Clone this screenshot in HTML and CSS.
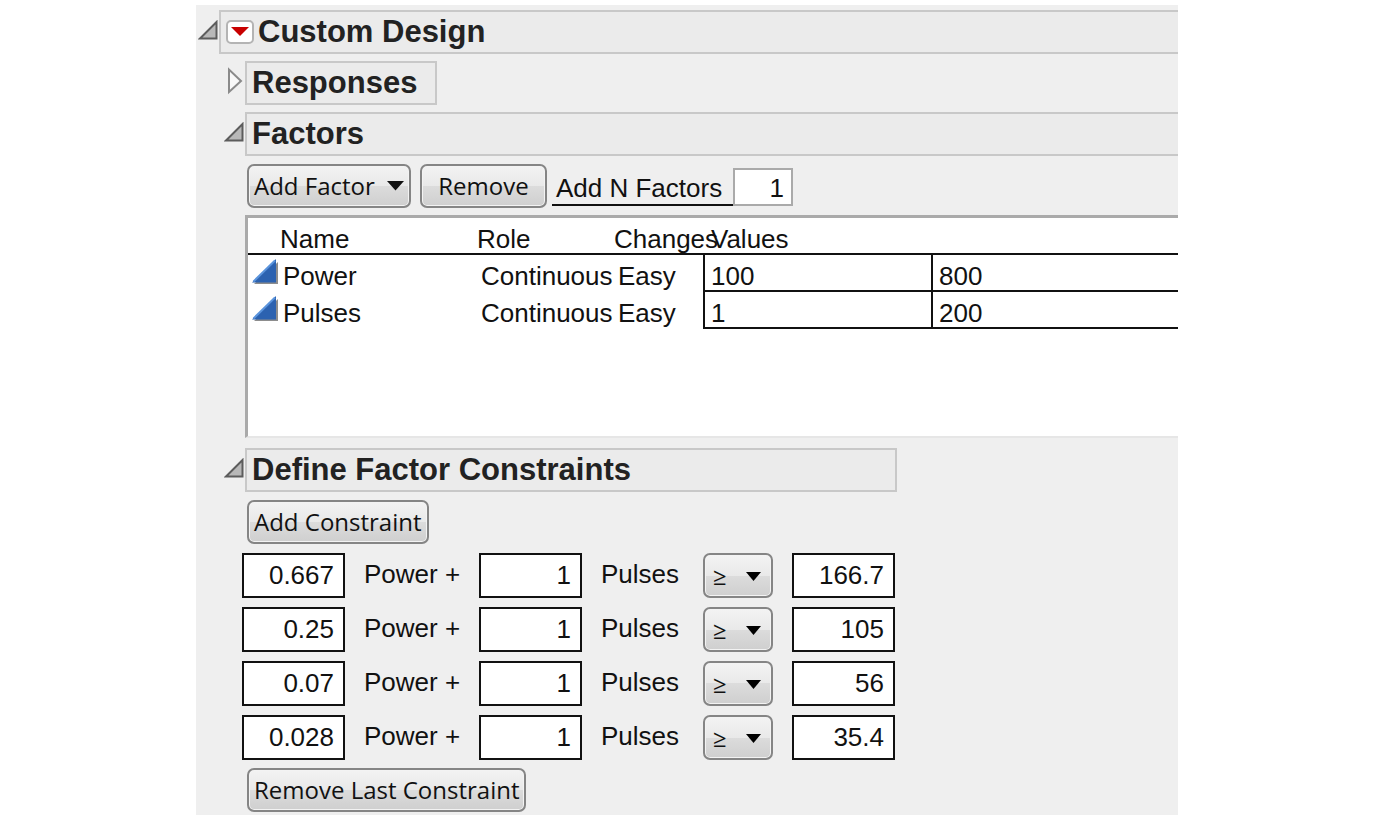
FILE: index.html
```html
<!DOCTYPE html>
<html lang="en">
<head>
  <meta charset="UTF-8">
  <title>Custom Design</title>
  <link rel="stylesheet" href="styles.css">
</head>
<body>
  <main class="panel">
    <div class="outline">
      <button class="toggle" aria-label="Collapse Custom Design">
        <svg width="20" height="20" viewBox="0 0 20 20"><path d="M2 18.500 18.500 2V18.500Z" fill="#b8b8b8" stroke="#5c5c5c" stroke-width="2"/></svg>
      </button>
      <div class="title title-open">
        <button class="menu" aria-label="Custom Design menu">
          <svg width="18" height="10" viewBox="0 0 18 10"><path d="M0 0H18L9 9Z" fill="#c80000"/></svg>
        </button>
        <h1>Custom Design</h1>
      </div>
    </div>

    <div class="content">
      <section class="outline">
        <button class="toggle" aria-label="Expand Responses">
          <svg width="20" height="28" viewBox="0 0 20 28"><path d="M5 2.500V25L17 14Z" fill="#f8f8f8" stroke="#8a8a8a" stroke-width="2"/></svg>
        </button>
        <div class="title title-small"><h2>Responses</h2></div>
      </section>

      <section>
        <div class="outline">
          <button class="toggle" aria-label="Collapse Factors">
            <svg width="20" height="20" viewBox="0 0 20 20"><path d="M2 18.500 18.500 2V18.500Z" fill="#b8b8b8" stroke="#5c5c5c" stroke-width="2"/></svg>
          </button>
          <div class="title title-open"><h2>Factors</h2></div>
        </div>
        <div class="toolbar">
          <button class="btn btn-factor">Add Factor
            <svg width="17" height="10" viewBox="0 0 17 10"><path d="M0 0H17L8.500 9.500Z" fill="#111"/></svg>
          </button>
          <button class="btn btn-remove">Remove</button>
          <div class="count">
            <label for="count">Add N Factors</label>
            <input type="text" id="count" value="1">
          </div>
        </div>
        <div class="factors">
          <table>
            <thead>
              <tr>
                <th class="col-name">Name</th>
                <th class="col-role">Role</th>
                <th class="col-changes">Changes</th>
                <th class="col-value">Values</th>
                <th></th>
              </tr>
            </thead>
            <tbody>
              <tr>
                <td class="name"><svg width="26" height="26" viewBox="0 0 26 26"><path d="M2 25H26V3Z" fill="#8d8d8d"/><path d="M0 23.500 24 0V23.500Z" fill="#2c62b0"/><path d="M1.500 22.500 23 1.500" stroke="#5b94dc" stroke-width="2"/></svg>Power</td>
                <td>Continuous</td>
                <td>Easy</td>
                <td class="value">100</td>
                <td class="value">800</td>
              </tr>
              <tr>
                <td class="name"><svg width="26" height="26" viewBox="0 0 26 26"><path d="M2 25H26V3Z" fill="#8d8d8d"/><path d="M0 23.500 24 0V23.500Z" fill="#2c62b0"/><path d="M1.500 22.500 23 1.500" stroke="#5b94dc" stroke-width="2"/></svg>Pulses</td>
                <td>Continuous</td>
                <td>Easy</td>
                <td class="value">1</td>
                <td class="value">200</td>
              </tr>
            </tbody>
          </table>
        </div>
      </section>

      <section>
        <div class="outline">
          <button class="toggle" aria-label="Collapse Define Factor Constraints">
            <svg width="20" height="20" viewBox="0 0 20 20"><path d="M2 18.500 18.500 2V18.500Z" fill="#b8b8b8" stroke="#5c5c5c" stroke-width="2"/></svg>
          </button>
          <div class="title title-medium"><h2>Define Factor Constraints</h2></div>
        </div>
        <div class="constraints">
          <button class="btn">Add Constraint</button>
          <div class="rows">
            <div class="constraint">
              <input type="text" id="power1" value="0.667">
              <label for="power1">Power +</label>
              <input type="text" id="pulses1" value="1">
              <label for="pulses1">Pulses</label>
              <div class="operator">
                <select aria-label="Operator"><option>≥</option><option>≤</option></select>
                <svg width="15" height="9" viewBox="0 0 15 9"><path d="M0 0H15L7.500 9Z"/></svg>
              </div>
              <input type="text" aria-label="Limit" value="166.7">
            </div>
            <div class="constraint">
              <input type="text" id="power2" value="0.25">
              <label for="power2">Power +</label>
              <input type="text" id="pulses2" value="1">
              <label for="pulses2">Pulses</label>
              <div class="operator">
                <select aria-label="Operator"><option>≥</option><option>≤</option></select>
                <svg width="15" height="9" viewBox="0 0 15 9"><path d="M0 0H15L7.500 9Z"/></svg>
              </div>
              <input type="text" aria-label="Limit" value="105">
            </div>
            <div class="constraint">
              <input type="text" id="power3" value="0.07">
              <label for="power3">Power +</label>
              <input type="text" id="pulses3" value="1">
              <label for="pulses3">Pulses</label>
              <div class="operator">
                <select aria-label="Operator"><option>≥</option><option>≤</option></select>
                <svg width="15" height="9" viewBox="0 0 15 9"><path d="M0 0H15L7.500 9Z"/></svg>
              </div>
              <input type="text" aria-label="Limit" value="56">
            </div>
            <div class="constraint">
              <input type="text" id="power4" value="0.028">
              <label for="power4">Power +</label>
              <input type="text" id="pulses4" value="1">
              <label for="pulses4">Pulses</label>
              <div class="operator">
                <select aria-label="Operator"><option>≥</option><option>≤</option></select>
                <svg width="15" height="9" viewBox="0 0 15 9"><path d="M0 0H15L7.500 9Z"/></svg>
              </div>
              <input type="text" aria-label="Limit" value="35.4">
            </div>
          </div>
          <button class="btn">Remove Last Constraint</button>
        </div>
      </section>
    </div>
  </main>
</body>
</html>
```

FILE: styles.css
```css
* {
  box-sizing: border-box;
}

body {
  margin: 0;
  background: #fff;
  color: #111;
  font-family: Arial, "Liberation Sans", sans-serif;
  font-size: 26px;
  line-height: 32px;
}

.panel {
  margin: 5px 210px 0 196px;
  padding: 5px 0 3px;
  background: #efefef;
  overflow: hidden;
}

.content {
  margin-left: 26px;
}

/* outline headings */
.outline {
  display: flex;
  margin-bottom: 7px;
}

.toggle {
  width: 23px;
  height: 40px;
  padding: 0;
  border: none;
  background: none;
  display: flex;
  align-items: center;
  justify-content: center;
}

.title {
  display: flex;
  align-items: center;
  height: 44px;
  padding-left: 5px;
  border: 2px solid #c8c8c8;
  background: #ebebeb;
}

.title-open {
  flex: 1;
  border-right: none;
}

.title-small {
  width: 192px;
}

.title-medium {
  width: 652px;
}

h1, h2 {
  margin: 0;
  color: #222;
  font-size: 31px;
  line-height: 40px;
}

.menu {
  display: flex;
  align-items: center;
  justify-content: center;
  width: 28px;
  height: 24px;
  margin-right: 4px;
  padding: 0;
  border: 2px solid #b4b4b4;
  border-radius: 5px;
  background: #fff;
}

/* buttons */
.btn {
  height: 44px;
  padding: 0 5px;
  color: #111;
  font-family: "Segoe UI", "Open Sans", sans-serif;
  font-size: 24px;
  line-height: 32px;
  white-space: nowrap;
}

.btn, select {
  border: 2px solid #858585;
  border-radius: 7px;
  background: linear-gradient(#f3f3f3, #e9e9e9 50%, #dcdcdc 50%, #cfcfcf);
  box-shadow: inset 0 0 0 1px #f3f3f3;
}

.toolbar {
  display: flex;
  gap: 9px;
  padding: 1px 0 7px 25px;
}

.btn-factor {
  display: flex;
  align-items: center;
  justify-content: space-between;
  width: 164px;
}

.btn-remove {
  width: 127px;
}

.count {
  display: flex;
  margin-left: -4px;
  padding: 4px 0 2px;
}

.count label {
  width: 181px;
  padding: 4px 0 0 4px;
  border-bottom: 2px solid #111;
}

input {
  width: 103px;
  padding: 0 9px 2px;
  border: 2px solid #111;
  background: #fff;
  color: #111;
  font: inherit;
  text-align: right;
}

.count input {
  width: 60px;
  padding: 2px 7px 0;
  border-color: #aaa;
}

/* factor table */
.factors {
  height: 223px;
  margin: 0 0 10px 23px;
  border: 3px solid #aaa;
  border-right: none;
  border-bottom: 2px solid #e6e6e6;
  background: #fff;
}

table {
  width: 100%;
  table-layout: fixed;
  border-collapse: separate;
  border-spacing: 0;
}

th, td {
  height: 37px;
  padding: 8px 0 0 4px;
  font-weight: normal;
  line-height: 27px;
  text-align: left;
  vertical-align: top;
  white-space: nowrap;
}

th {
  border-bottom: 2px solid #111;
  padding-left: 0;
}

.col-name {
  width: 229px;
  padding-left: 32px;
}

.col-role {
  width: 137px;
}

.col-changes {
  width: 89px;
}

.col-value {
  width: 228px;
  padding-left: 8px;
}

.name svg {
  margin: -8px 5px 0 0;
}

.value {
  padding-left: 6px;
  border-left: 2px solid #111;
  border-bottom: 2px solid #111;
}

/* constraints */
.constraints {
  padding: 1px 0 0 25px;
}

.constraints .btn {
  display: block;
}

.rows {
  display: grid;
  gap: 9px;
  margin: 9px 0 8px -5px;
}

.constraint {
  display: grid;
  grid-template-columns: 103px 134px 103px 121px 89px 103px;
  height: 45px;
}

.constraint label {
  padding: 5px 0 0 19px;
}

.operator {
  position: relative;
  width: 70px;
}

select {
  appearance: none;
  width: 100%;
  height: 100%;
  padding: 0 8px;
  color: #111;
  font-family: "Segoe UI", "Open Sans", sans-serif;
  font-size: 24px;
}

.operator svg {
  position: absolute;
  right: 12px;
  top: 19px;
  pointer-events: none;
}
```
